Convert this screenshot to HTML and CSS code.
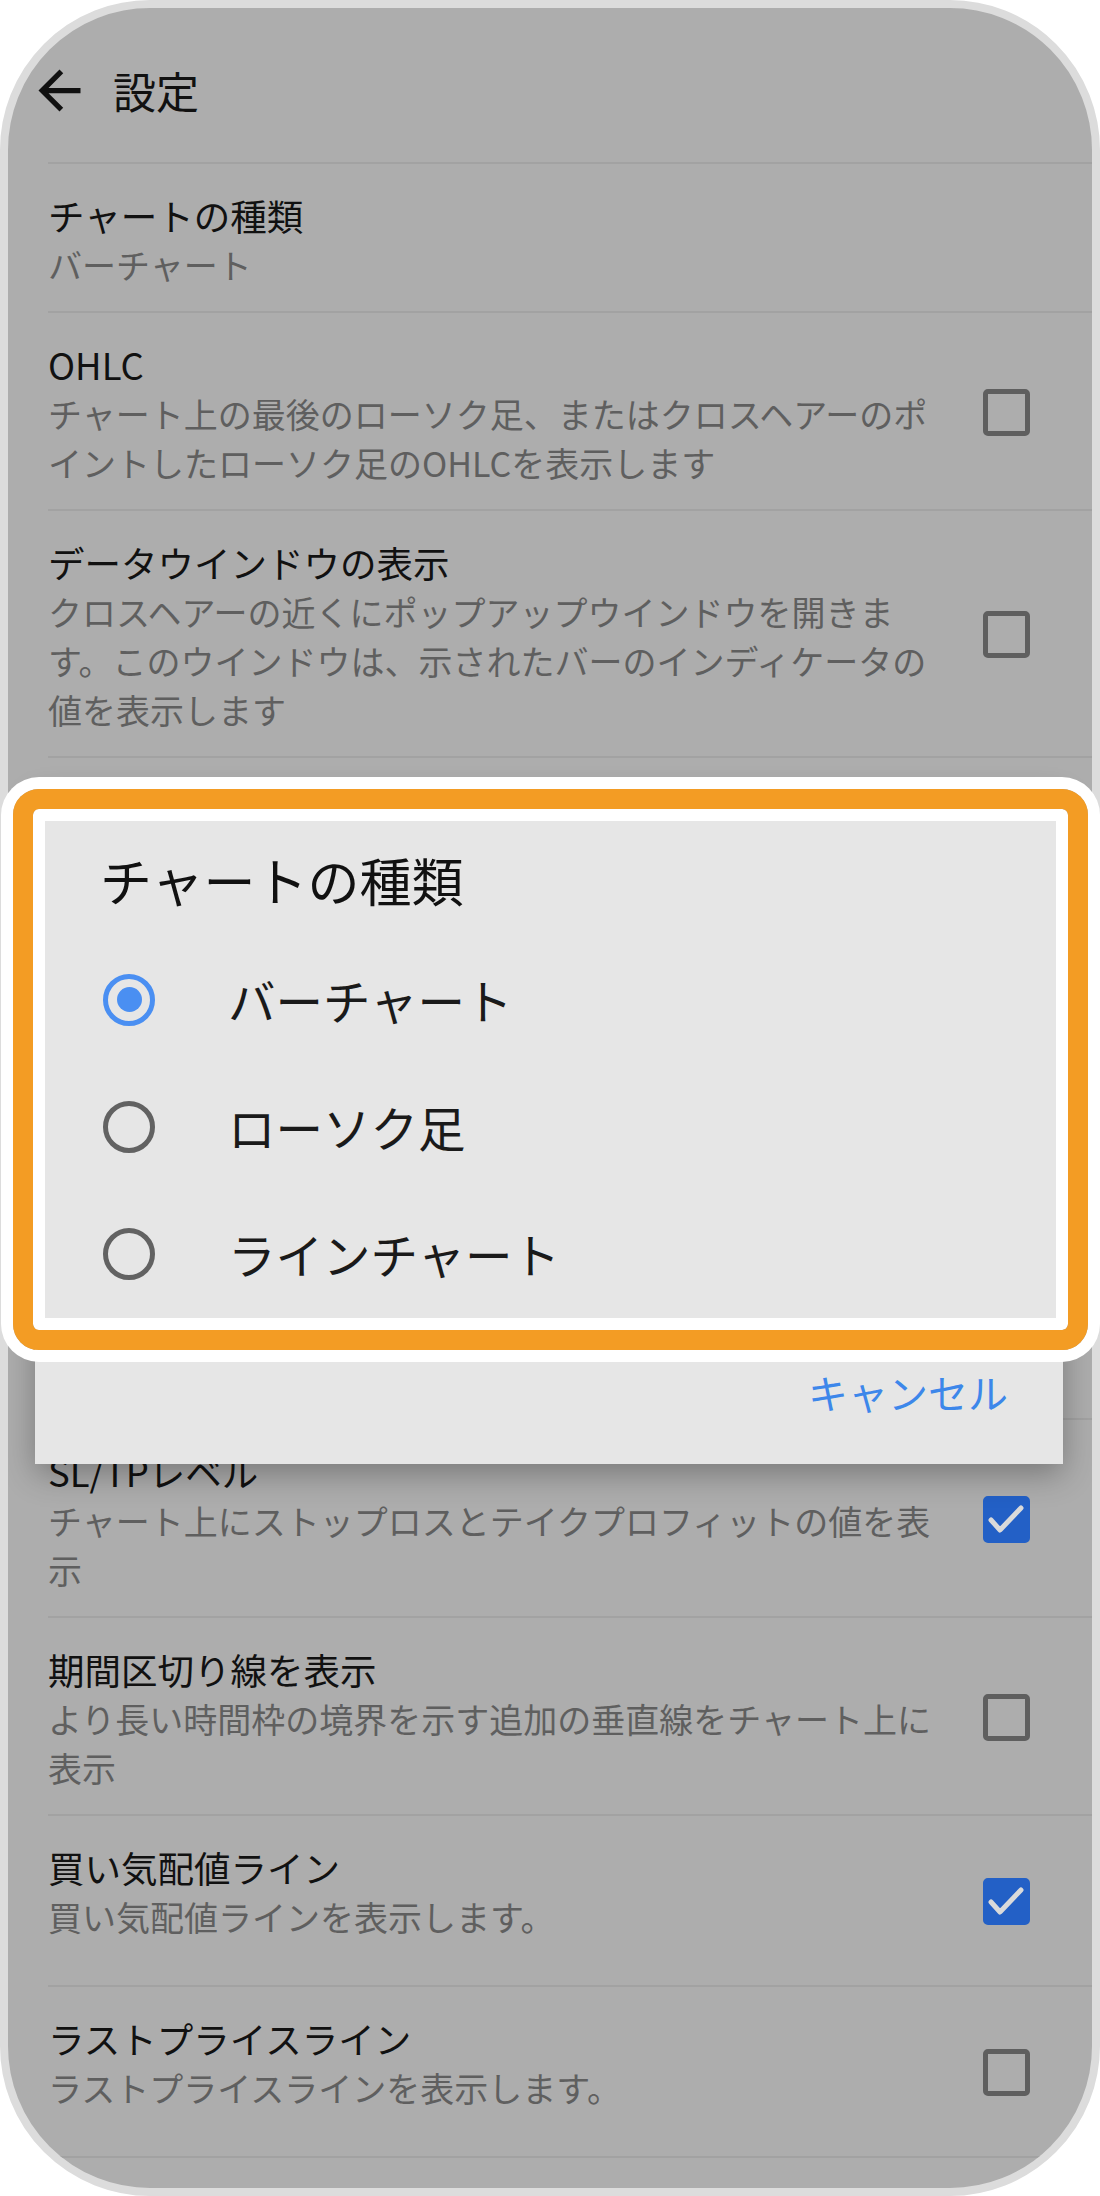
FILE: index.html
```html
<!DOCTYPE html>
<html lang="ja">

<head>
    <meta charset="UTF-8">
    <meta name="viewport" content="width=device-width, initial-scale=1.0">
    <title>設定</title>
    <link rel="stylesheet" href="styles.css">
</head>

<body>
    <div class="device">
        <div class="phone">
            <header class="topbar">
                <svg class="back" viewBox="0 0 24 24"><path d="M20 11H7.83l5.59-5.59L12 4l-8 8 8 8 1.41-1.41L7.83 13H20v-2z"/></svg>
                <h1>設定</h1>
            </header>

            <ul class="prefs">
                <li class="pref">
                    <div class="text">
                        <h2>チャートの種類</h2>
                        <p>バーチャート</p>
                    </div>
                </li>
                <li class="pref check">
                    <div class="text">
                        <h2>OHLC</h2>
                        <p>チャート上の最後のローソク足、またはクロスヘアーのポイントしたローソク足のOHLCを表示します</p>
                    </div>
                    <span class="box"></span>
                </li>
                <li class="pref check">
                    <div class="text">
                        <h2>データウインドウの表示</h2>
                        <p>クロスヘアーの近くにポップアップウインドウを開きます。このウインドウは、示されたバーのインディケータの値を表示します</p>
                    </div>
                    <span class="box"></span>
                </li>
                <!-- rows under the dialog, not visible -->
                <li class="pref check under">
                    <div class="text">
                        <h2>取引レベル</h2>
                        <p>ポジションと注文のレベルを表示します。</p>
                    </div>
                    <span class="box on"></span>
                </li>
                <li class="pref check under">
                    <div class="text">
                        <h2>取引履歴の表示</h2>
                        <p>約定した取引をチャート上に表示します。</p>
                    </div>
                    <span class="box"></span>
                </li>
                <li class="pref check under">
                    <div class="text">
                        <h2>ボリュームの表示</h2>
                        <p>ボリュームを表示します。</p>
                    </div>
                    <span class="box"></span>
                </li>
                <li class="pref under">
                    <div class="text">
                        <h2>カラー</h2>
                        <p>白地に黒</p>
                    </div>
                </li>
                <li class="pref check">
                    <div class="text">
                        <h2>SL/TPレベル</h2>
                        <p>チャート上にストップロスとテイクプロフィットの値を表示</p>
                    </div>
                    <span class="box on"></span>
                </li>
                <li class="pref check">
                    <div class="text">
                        <h2>期間区切り線を表示</h2>
                        <p>より長い時間枠の境界を示す追加の垂直線をチャート上に表示</p>
                    </div>
                    <span class="box"></span>
                </li>
                <li class="pref check">
                    <div class="text">
                        <h2>買い気配値ライン</h2>
                        <p>買い気配値ラインを表示します。</p>
                    </div>
                    <span class="box on"></span>
                </li>
                <li class="pref check">
                    <div class="text">
                        <h2>ラストプライスライン</h2>
                        <p>ラストプライスラインを表示します。</p>
                    </div>
                    <span class="box"></span>
                </li>
            </ul>

            <div class="dialog">
                <h3>チャートの種類</h3>
                <div class="opts">
                    <div class="opt"><span class="radio on"></span><span class="label">バーチャート</span></div>
                    <div class="opt"><span class="radio"></span><span class="label">ローソク足</span></div>
                    <div class="opt"><span class="radio"></span><span class="label">ラインチャート</span></div>
                </div>
                <div class="actions">キャンセル</div>
            </div>
        </div>

        <div class="highlight"></div>
    </div>
</body>

</html>
```

FILE: styles.css
```css
* {
    margin: 0;
    padding: 0;
    box-sizing: border-box;
}

body {
    background: #fff;
    font-family: "Noto Sans CJK JP", "Noto Sans", sans-serif;
}

.device {
    position: relative;
    width: 1100px;
    height: 2196px;
}

.phone {
    position: relative;
    width: 1100px;
    height: 2196px;
    border: 8px solid #dcdcdc;
    border-radius: 150px;
    overflow: hidden;
    background: #adadad;
}

/* header */
.topbar {
    display: flex;
    align-items: center;
    height: 154px;
    padding: 10px 0 0 20px;
}

.back {
    width: 63px;
    height: 63px;
    fill: #111;
}

.topbar h1 {
    margin-left: 22px;
    font-size: 43px;
    font-weight: 400;
    line-height: 1;
    color: #111;
}

/* settings list */
.prefs {
    list-style: none;
    margin-left: 40px;
    border-top: 2px solid #a2a2a2;
}

.pref {
    display: flex;
    align-items: center;
    padding: 27px 62px 22px 0;
    border-bottom: 2px solid #a2a2a2;
}

.pref.check {
    min-height: 171px;
}

/* covered by the dialog */
.pref.under .text,
.pref.under .box {
    visibility: hidden;
}

.text {
    flex: 1;
    align-self: flex-start;
}

.text h2 {
    font-size: 36.5px;
    font-weight: 400;
    line-height: 49px;
    color: #111;
}

.text p {
    font-size: 34px;
    line-height: 49px;
    color: #5f5f5f;
}

.box {
    flex: none;
    width: 47px;
    height: 47px;
    margin: 0 0 3px 40px;
    border: 5px solid #5f5f5f;
    border-radius: 5px;
}

.box.on {
    border-color: #2360c6;
    background: #2360c6 url("data:image/svg+xml,%3Csvg xmlns='http://www.w3.org/2000/svg' viewBox='0 0 37 37'%3E%3Cpath d='M3 19l9 10L33 7' fill='none' stroke='%23dadada' stroke-width='5' stroke-linecap='round' stroke-linejoin='round'/%3E%3C/svg%3E") center / 100% no-repeat;
}

/* dialog */
.dialog {
    position: absolute;
    left: 27px;
    top: 782px;
    width: 1028px;
    padding: 60px 55px 48px 0;
    background: #e6e6e6;
    box-shadow: 0 10px 30px rgba(0, 0, 0, .3);
}

.dialog h3 {
    padding-left: 65px;
    font-size: 52px;
    font-weight: 400;
    line-height: 60px;
    color: #111;
}

.opts {
    margin-top: 26px;
}

.opt {
    display: flex;
    align-items: center;
    height: 127px;
}

.radio {
    display: flex;
    align-items: center;
    justify-content: center;
    width: 52px;
    height: 52px;
    margin-left: 68px;
    border: 5px solid #626262;
    border-radius: 50%;
}

.radio.on {
    border-color: #4a8ff2;
}

.radio.on::after {
    content: "";
    width: 25px;
    height: 25px;
    border-radius: 50%;
    background: #4a8ff2;
}

.label {
    margin-left: 73px;
    font-size: 47.5px;
    color: #1a1a1a;
}

.actions {
    margin-top: 51px;
    text-align: right;
    font-size: 40px;
    line-height: 48px;
    color: #3d87ea;
}

/* orange annotation frame */
.highlight {
    position: absolute;
    left: 13px;
    top: 789px;
    width: 1075px;
    height: 561px;
    border: 20px solid #f39c24;
    border-radius: 26px;
    box-shadow: 0 0 0 12px #fff, inset 0 0 0 12px #fff;
}
```
